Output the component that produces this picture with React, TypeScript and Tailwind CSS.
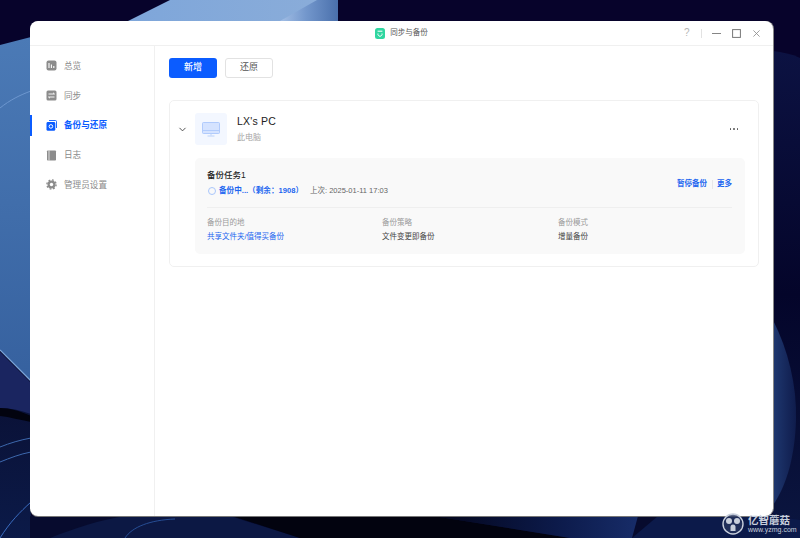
import React from 'react';
import { ChevronDown } from 'lucide-react';

const font = { fontFamily: '"Liberation Sans", "Noto Sans CJK SC", sans-serif' };

const Wallpaper = () => (
  <svg className="absolute inset-0" width="800" height="538" viewBox="0 0 800 538">
    <defs>
      <linearGradient id="topBlue" x1="0" y1="0" x2="1" y2="0">
        <stop offset="0" stopColor="#7ea6da" />
        <stop offset="1" stopColor="#8badd9" />
      </linearGradient>
      <linearGradient id="topEdge" x1="0" y1="0" x2="1" y2="0">
        <stop offset="0" stopColor="#a3bfe6" />
        <stop offset="0.45" stopColor="#7397cc" />
        <stop offset="1" stopColor="#4a70ac" />
      </linearGradient>
      <linearGradient id="leftBlue" x1="0" y1="0" x2="0" y2="1">
        <stop offset="0" stopColor="#4b7ab6" />
        <stop offset="1" stopColor="#36619f" />
      </linearGradient>
      <linearGradient id="crescent" x1="0" y1="0" x2="1" y2="0">
        <stop offset="0" stopColor="#1f3870" />
        <stop offset="1" stopColor="#0f1c4c" />
      </linearGradient>
      <linearGradient id="rightDark" x1="0" y1="0" x2="0" y2="1">
        <stop offset="0" stopColor="#0c1242" />
        <stop offset="0.5" stopColor="#04052a" />
        <stop offset="1" stopColor="#0b1640" />
      </linearGradient>
      <linearGradient id="lowerLeft" x1="0" y1="0" x2="0" y2="1">
        <stop offset="0" stopColor="#0a0e30" />
        <stop offset="1" stopColor="#0b1a48" />
      </linearGradient>
      <linearGradient id="bottomGlow" x1="0" y1="0" x2="1" y2="0">
        <stop offset="0" stopColor="#03051a" />
        <stop offset="0.6" stopColor="#0c1a4a" />
        <stop offset="1" stopColor="#172c68" />
      </linearGradient>
    </defs>
    <rect width="800" height="538" fill="#07032b" />
    {/* swirl top */}
    <path d="M128 21 L170 0 L338 0 L338 21 Z" fill="url(#topBlue)" />
    <path d="M280 21 L317 0 L338 0 L338 21 Z" fill="url(#topEdge)" />
    {/* left strip */}
    <path d="M0 45 L31 37 L31 381 L0 350 Z" fill="url(#leftBlue)" />
    <path d="M0 108 C10 100 20 95 31 91" stroke="#6d97cf" strokeWidth="1" fill="none" />
    <path d="M0 350 L31 381 L31 538 L0 538 Z" fill="url(#lowerLeft)" />
    <path d="M0 350 L31 381" stroke="#7ba3d8" strokeWidth="1.2" fill="none" />
    <path d="M0 352 L31 383 L31 414 C20 410 10 408 0 408 Z" fill="#1a2560" />
    <path d="M0 408 C10 408 20 411 31 416 L31 422 C20 420 10 417 0 416 Z" fill="#02030f" />
    <path d="M0 447 C10 443 20 440 31 438" stroke="#3d68ad" strokeWidth="1" fill="none" />
    <path d="M0 462 C10 458 20 454 31 452" stroke="#3d68ad" strokeWidth="1" fill="none" />
    <path d="M0 538 C10 522 20 512 31 502" stroke="#3a6cc0" strokeWidth="1" fill="none" />
    {/* right strip */}
    <path d="M773 51 C782 52 792 54 800 58 L800 538 L773 538 Z" fill="url(#rightDark)" />
    <path d="M773 320 C788 350 797 385 796 420 C795 455 787 485 773 505 Z" fill="url(#crescent)" />
    {/* bottom strip */}
    <rect x="30" y="516" width="743" height="22" fill="#070b2e" />
    <path d="M50 538 C75 528 100 520 125 516 L230 516 L300 538 Z" fill="#0c1844" />
    <path d="M125 538 C132 527 150 520 175 519" stroke="#2d5aa8" strokeWidth="0.8" fill="none" />
    <path d="M232 516 L300 538 L570 538 L433 516 Z" fill="#02030f" />
    <path d="M433 516 L570 538 L632 538 L638 516 Z" fill="url(#bottomGlow)" />
    <path d="M632 538 L658 516 L773 516 L800 520 L800 538 Z" fill="#0c1a4a" />
  </svg>
);

const Watermark = () => (
  <div className="absolute left-[722px] top-[513px] flex items-start gap-[4px] text-[#c8cfdc]">
    <svg width="22" height="22" viewBox="0 0 22 22">
      <circle cx="11" cy="11" r="10" fill="#27365f" fillOpacity="0.75" stroke="#c8cfdc" strokeWidth="1.4" />
      <circle cx="7" cy="8" r="3" fill="#c8cfdc" />
      <circle cx="15" cy="8" r="3" fill="#c8cfdc" />
      <path d="M8.5 14 a2.5 2.5 0 0 1 5 0 v4 h-5 Z" fill="#c8cfdc" />
    </svg>
    <div className="flex flex-col items-start mt-[2px]">
      <span className="text-[10.5px] leading-[10px] font-bold" style={{ fontFamily: '"Noto Sans CJK SC", sans-serif' }}>亿智蘑菇</span>
      <span className="text-[7px] leading-[7px] mt-[1px] font-['Liberation_Sans']">www.yzmg.com</span>
    </div>
  </div>
);

const OverviewIcon = () => (
  <svg width="11" height="11" viewBox="0 0 11 11">
    <rect x="0.5" y="0.5" width="10" height="10" rx="2" fill="#8c8c8c" />
    <path d="M3 3v5M5.4 4.5V8M7.8 6v2" stroke="#fff" strokeWidth="1.1" />
  </svg>
);
const SyncIcon = () => (
  <svg width="11" height="11" viewBox="0 0 11 11">
    <rect x="0.5" y="0.5" width="10" height="10" rx="1.5" fill="#8c8c8c" />
    <path d="M2.5 4h6L7 2.8M8.5 7h-6L4 8.2" stroke="#fff" strokeWidth="0.9" fill="none" />
  </svg>
);
const BackupIcon = () => (
  <svg width="11" height="11" viewBox="0 0 11 11">
    <path d="M3 0.5h6.5a1 1 0 0 1 1 1V8" stroke="#0b5cff" strokeWidth="0.9" fill="none" />
    <rect x="0.5" y="2" width="8.8" height="8.8" rx="1.4" fill="#0b5cff" />
    <circle cx="4.9" cy="6.4" r="1.8" fill="none" stroke="#fff" strokeWidth="1" />
  </svg>
);
const LogIcon = () => (
  <svg width="11" height="11" viewBox="0 0 11 11">
    <rect x="1" y="0.5" width="9" height="10" rx="0.8" fill="#8c8c8c" />
    <path d="M3 0.5v10" stroke="#fff" strokeWidth="0.7" />
  </svg>
);
const GearIcon = () => (
  <svg width="11" height="11" viewBox="0 0 11 11">
    <circle cx="5.5" cy="5.5" r="4" fill="#8c8c8c" />
    <circle cx="5.5" cy="5.5" r="4.6" fill="none" stroke="#8c8c8c" strokeWidth="1.4" strokeDasharray="1.8 1.8" />
    <circle cx="5.5" cy="5.5" r="1.7" fill="#fff" />
  </svg>
);

const navItems = [
  { label: '总览', icon: <OverviewIcon /> },
  { label: '同步', icon: <SyncIcon /> },
  { label: '备份与还原', icon: <BackupIcon />, active: true },
  { label: '日志', icon: <LogIcon /> },
  { label: '管理员设置', icon: <GearIcon /> },
];

const fields = [
  { label: '备份目的地', value: '共享文件夹/值得买备份', link: true },
  { label: '备份策略', value: '文件变更即备份' },
  { label: '备份模式', value: '增量备份' },
];

export default function App() {
  return (
    <div className="relative w-[800px] h-[538px] overflow-hidden pl-[30px] pt-[21px]" style={font}>
      <Wallpaper />
      <div className="relative w-[743px] h-[495px] bg-white rounded-[8px] overflow-hidden flex flex-col shadow-[0_1px_0_#777,1px_0_0_#888]">
        {/* title bar */}
        <div className="relative h-[25px] shrink-0 border-b border-[#f0f0f0] flex items-center justify-center">
          <div className="flex items-center gap-[5px]">
            <svg width="10" height="11" viewBox="0 0 10 11">
              <rect width="10" height="11" rx="2.5" fill="#2fd6a0" />
              <path d="M2.6 3.2h4.8M3 5.5a2.1 2.1 0 1 0 4 0" stroke="#fff" strokeWidth="1" fill="none" />
            </svg>
            <span className="text-[7.5px] leading-[12px] text-[#555]">同步与备份</span>
          </div>
          <div className="absolute right-[13px] top-[6px] h-[12px] flex items-center">
            <span className="text-[10px] leading-[12px] text-[#b5b5b5] w-[6px]">?</span>
            <div className="w-px h-[9px] bg-[#e2e2e2] ml-[11px] mr-[10px]" />
            <svg width="9" height="9" viewBox="0 0 9 9">
              <path d="M0 4.5h9" stroke="#777" strokeWidth="0.9" />
            </svg>
            <svg width="9" height="9" viewBox="0 0 9 9" className="ml-[11px]">
              <rect x="0.6" y="0.6" width="7.8" height="7.8" fill="none" stroke="#777" strokeWidth="1" />
            </svg>
            <svg width="7" height="7" viewBox="0 0 7 7" className="ml-[12px]">
              <path d="M0.4 0.4 6.6 6.6M6.6 0.4 0.4 6.6" stroke="#888" strokeWidth="0.8" />
            </svg>
          </div>
        </div>

        <div className="flex flex-1 min-h-0">
          {/* sidebar */}
          <div className="w-[125px] shrink-0 border-r border-[#f0f0f0] pt-[5px]">
            {navItems.map((item) => (
              <div key={item.label} className="relative h-[29.75px] flex items-center pl-[16px] gap-[7px]">
                {item.active && <div className="absolute left-0 top-[4px] bottom-[4px] w-[2px] bg-[#0b5cff]" />}
                {item.icon}
                <span className={`text-[8.6px] leading-[12px] ${item.active ? 'text-[#0b5cff] font-bold' : 'text-[#8a8a8a]'}`}>
                  {item.label}
                </span>
              </div>
            ))}
          </div>

          {/* main */}
          <div className="flex-1 pl-[14px] pr-[14px] pt-[12px]">
            <div className="flex gap-[8px]">
              <button className="w-[48px] h-[20px] rounded-[3px] bg-[#0b5cff] text-white text-[9px] font-medium">新增</button>
              <button className="w-[48px] h-[20px] rounded-[3px] border border-[#e2e2e2] bg-white text-[#555] text-[9px]">还原</button>
            </div>

            <div className="mt-[22px] h-[167px] rounded-[5px] border border-[#f0f0f0] pl-[25px] pr-[13px] pt-[12px]">
              <div className="relative flex h-[33px]">
                <ChevronDown size={11} strokeWidth={2} className="absolute left-[-18px] top-[11px] text-[#444]" />
                <div className="w-[32px] h-[32px] rounded-[3px] bg-[#f3f7ff] flex items-center justify-center">
                  <svg width="18" height="15" viewBox="0 0 18 15">
                    <rect x="0.5" y="0.5" width="17" height="11" rx="1" fill="#d5e3ff" stroke="#a3c1fb" strokeWidth="0.8" />
                    <path d="M1 8.5h16" stroke="#a3c1fb" strokeWidth="0.7" />
                    <path d="M9 11.5v2M5.5 14h7" stroke="#bcd2fa" strokeWidth="1" />
                  </svg>
                </div>
                <div className="ml-[10px] flex flex-col">
                  <span className="text-[10.5px] leading-[14px] mt-[1px] font-medium text-[#222] tracking-[0.2px]">LX's PC</span>
                  <span className="text-[8px] leading-[11px] mt-[4px] text-[#a5a5a5]">此电脑</span>
                </div>
                <div className="absolute right-[7px] top-[15px] flex gap-[2px]">
                  <div className="w-[1.5px] h-[1.5px] rounded-full bg-[#555]" />
                  <div className="w-[1.5px] h-[1.5px] rounded-full bg-[#555]" />
                  <div className="w-[1.5px] h-[1.5px] rounded-full bg-[#555]" />
                </div>
              </div>

              <div className="mt-[12px] h-[96px] rounded-[5px] bg-[#f9f9f9] pl-[12px] pr-[13px] pt-[11px]">
                <div className="flex items-start justify-between h-[39px] border-b border-[#efefef]">
                  <div>
                    <div className="text-[8.5px] leading-[12px] font-medium text-[#222]">备份任务1</div>
                    <div className="flex items-center mt-[4px] h-[12px]">
                      <div className="w-[8px] h-[8px] ml-[1px] rounded-full border border-[#a9c6fb]" />
                      <span className="ml-[3px] text-[7.6px] leading-[12px] font-bold text-[#1c66f0]">备份中...（剩余：1908）</span>
                      <span className="ml-[7px] text-[7.5px] leading-[12px] text-[#666]">上次: 2025-01-11 17:03</span>
                    </div>
                  </div>
                  <div className="flex items-center mt-[9px] h-[12px] text-[7.5px] font-bold text-[#1c66f0]">
                    <span>暂停备份</span>
                    <div className="w-px h-[9px] bg-[#e8e8e8] ml-[5px] mr-[4px]" />
                    <span>更多</span>
                  </div>
                </div>
                <div className="grid grid-cols-[175px_176px_1fr] pt-[9px]">
                  {fields.map((f) => (
                    <div key={f.label}>
                      <div className="text-[7.5px] leading-[11px] text-[#9a9a9a]">{f.label}</div>
                      <div className={`text-[7.5px] leading-[11px] mt-[3px] ${f.link ? 'text-[#1c66f0]' : 'text-[#444]'}`}>{f.value}</div>
                    </div>
                  ))}
                </div>
              </div>
            </div>
          </div>
        </div>
      </div>
      <Watermark />
    </div>
  );
}
